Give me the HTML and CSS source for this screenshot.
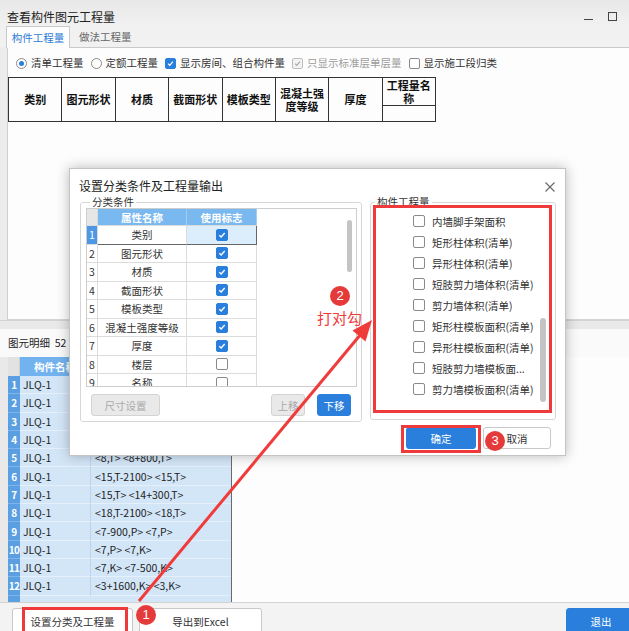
FILE: index.html
```html
<!DOCTYPE html>
<html lang="zh-CN">
<head>
<meta charset="utf-8">
<title>查看构件图元工程量</title>
<link rel="stylesheet" href="styles.css">
</head>
<body>
<div class="win">
  <div class="titlebar">
    <span class="title">查看构件图元工程量</span>
    <span class="wmin"></span>
    <span class="wmax"></span>
  </div>
  <div class="tabs">
    <div class="tab active">构件工程量</div>
    <div class="tab">做法工程量</div>
  </div>
  <div class="panel">
    <div class="opts">
      <span class="radio on"></span><span class="lbl">清单工程量</span>
      <span class="radio"></span><span class="lbl">定额工程量</span>
      <span class="cb on"><svg viewBox="0 0 12 12"><path d="M2.8 6.2 5 8.4 9.2 3.6"/></svg></span><span class="lbl">显示房间、组合构件量</span>
      <span class="cb dis"><svg viewBox="0 0 12 12"><path d="M2.8 6.2 5 8.4 9.2 3.6"/></svg></span><span class="lbl dim">只显示标准层单层量</span>
      <span class="cb"></span><span class="lbl">显示施工段归类</span>
    </div>
    <table class="qty">
      <colgroup><col><col><col><col><col><col><col><col></colgroup>
      <tr class="r1">
        <th rowspan="2">类别</th><th rowspan="2">图元形状</th><th rowspan="2">材质</th><th rowspan="2">截面形状</th><th rowspan="2">模板类型</th><th rowspan="2">混凝土强度等级</th><th rowspan="2">厚度</th><th>工程量名称</th>
      </tr>
      <tr class="r2"><th></th></tr>
    </table>
  </div>
  <div class="splitter"></div>
  <div class="dhead">图元明细&nbsp;&nbsp;52</div>
  <div class="detail">
    <div class="mgrid">
      <div class="mh mhrn"></div><div class="mh">构件名称</div><div class="mh">图元位置</div>
      <div class="mrn">1</div><div class="mnm">JLQ-1</div><div class="mval">&lt;8,T-2100&gt; &lt;8,T&gt;</div>
      <div class="mrn">2</div><div class="mnm">JLQ-1</div><div class="mval">&lt;9,T&gt; &lt;9+800,T&gt;</div>
      <div class="mrn">3</div><div class="mnm">JLQ-1</div><div class="mval">&lt;10,T-2100&gt; &lt;10,T&gt;</div>
      <div class="mrn">4</div><div class="mnm">JLQ-1</div><div class="mval">&lt;12,T&gt; &lt;12+300,T&gt;</div>
      <div class="mrn">5</div><div class="mnm">JLQ-1</div><div class="mval">&lt;8,T&gt; &lt;8+800,T&gt;</div>
      <div class="mrn">6</div><div class="mnm">JLQ-1</div><div class="mval">&lt;15,T-2100&gt; &lt;15,T&gt;</div>
      <div class="mrn">7</div><div class="mnm">JLQ-1</div><div class="mval">&lt;15,T&gt; &lt;14+300,T&gt;</div>
      <div class="mrn">8</div><div class="mnm">JLQ-1</div><div class="mval">&lt;18,T-2100&gt; &lt;18,T&gt;</div>
      <div class="mrn">9</div><div class="mnm">JLQ-1</div><div class="mval">&lt;7-900,P&gt; &lt;7,P&gt;</div>
      <div class="mrn">10</div><div class="mnm">JLQ-1</div><div class="mval">&lt;7,P&gt; &lt;7,K&gt;</div>
      <div class="mrn">11</div><div class="mnm">JLQ-1</div><div class="mval">&lt;7,K&gt; &lt;7-500,K&gt;</div>
      <div class="mrn">12</div><div class="mnm">JLQ-1</div><div class="mval">&lt;3+1600,K&gt; &lt;3,K&gt;</div>
    </div>
    <div class="rest"></div>
  </div>
  <div class="bbar">
    <button class="btn b1">设置分类及工程量</button>
    <button class="btn b2">导出到Excel</button>
    <button class="btn exit">退出</button>
  </div>
</div>

<div class="dialog">
  <div class="dtitle">
    <span class="dtext">设置分类条件及工程量输出</span>
    <svg class="close" viewBox="0 0 10 10"><path d="M0.5 0.5 9.5 9.5M9.5 0.5 0.5 9.5"/></svg>
  </div>
  <div class="dbody">
    <fieldset class="fs fs-l">
      <legend>分类条件</legend>
      <div class="gbox">
        <div class="dgrid">
          <div class="hrn"></div><div class="h">属性名称</div><div class="h">使用标志</div>
          <div class="rn sel">1</div><div class="nm s1">类别</div><div class="fl s1 s1f"><span class="cb on big"><svg viewBox="0 0 12 12"><path d="M2.8 6.2 5 8.4 9.2 3.6"/></svg></span></div>
          <div class="rn">2</div><div class="nm">图元形状</div><div class="fl"><span class="cb on big"><svg viewBox="0 0 12 12"><path d="M2.8 6.2 5 8.4 9.2 3.6"/></svg></span></div>
          <div class="rn">3</div><div class="nm">材质</div><div class="fl"><span class="cb on big"><svg viewBox="0 0 12 12"><path d="M2.8 6.2 5 8.4 9.2 3.6"/></svg></span></div>
          <div class="rn">4</div><div class="nm">截面形状</div><div class="fl"><span class="cb on big"><svg viewBox="0 0 12 12"><path d="M2.8 6.2 5 8.4 9.2 3.6"/></svg></span></div>
          <div class="rn">5</div><div class="nm">模板类型</div><div class="fl"><span class="cb on big"><svg viewBox="0 0 12 12"><path d="M2.8 6.2 5 8.4 9.2 3.6"/></svg></span></div>
          <div class="rn">6</div><div class="nm">混凝土强度等级</div><div class="fl"><span class="cb on big"><svg viewBox="0 0 12 12"><path d="M2.8 6.2 5 8.4 9.2 3.6"/></svg></span></div>
          <div class="rn">7</div><div class="nm">厚度</div><div class="fl"><span class="cb on big"><svg viewBox="0 0 12 12"><path d="M2.8 6.2 5 8.4 9.2 3.6"/></svg></span></div>
          <div class="rn">8</div><div class="nm">楼层</div><div class="fl"><span class="cb big"></span></div>
          <div class="rn">9</div><div class="nm">名称</div><div class="fl"><span class="cb big"></span></div>
        </div>
        <div class="vs vs-l"><div class="thumb"></div></div>
      </div>
      <div class="gbtns">
        <button class="dbtn dis">尺寸设置</button>
        <button class="dbtn dis up">上移</button>
        <button class="dbtn pri down">下移</button>
      </div>
    </fieldset>
    <fieldset class="fs fs-r">
      <legend>构件工程量</legend>
      <div class="list">
        <div class="items">
          <div class="item"><span class="cb big"></span><span>内墙脚手架面积</span></div>
          <div class="item"><span class="cb big"></span><span>矩形柱体积(清单)</span></div>
          <div class="item"><span class="cb big"></span><span>异形柱体积(清单)</span></div>
          <div class="item"><span class="cb big"></span><span>短肢剪力墙体积(清单)</span></div>
          <div class="item"><span class="cb big"></span><span>剪力墙体积(清单)</span></div>
          <div class="item"><span class="cb big"></span><span>矩形柱模板面积(清单)</span></div>
          <div class="item"><span class="cb big"></span><span>异形柱模板面积(清单)</span></div>
          <div class="item"><span class="cb big"></span><span>短肢剪力墙模板面...</span></div>
          <div class="item"><span class="cb big"></span><span>剪力墙模板面积(清单)</span></div>
        </div>
        <div class="vs vs-r"><div class="thumb"></div></div>
      </div>
    </fieldset>
  </div>
  <div class="dbtns">
    <button class="dbtn pri ok">确定</button>
    <button class="dbtn cancel">取消</button>
  </div>
</div>

<div class="mark m-right"></div>
<div class="mark m-ok"></div>
<div class="mark m-b1"></div>
<svg class="arrow" viewBox="0 0 629 631"><line x1="139" y1="601" x2="361" y2="334"/><polygon points="372,320 365.5,341.5 352.5,330.5"/></svg>
<div class="note">打对勾</div>
<div class="badge bd1">1</div>
<div class="badge bd2">2</div>
<div class="badge bd3">3</div>
</body>
</html>
```

FILE: styles.css
```css
* { box-sizing: border-box; }
html, body { margin: 0; padding: 0; }
body {
  width: 629px; height: 631px; overflow: hidden; position: relative;
  background: #eeeeee;
  font-family: "Noto Sans CJK SC", "Noto Sans", sans-serif;
  font-size: 10.5px; color: #333;
}

/* ---------- main window ---------- */
.win { display: flex; flex-direction: column; height: 631px; background: #ececec; }
.titlebar {
  flex: none; height: 26px; display: flex; align-items: center; padding-left: 7px;
  background: linear-gradient(#e8e8e8, #f1f1f1);
}
.title { flex: 1; font-size: 12px; line-height: 16px; color: #222; margin-top: 8px; }
.wmin { width: 9px; height: 1px; background: #444; margin: 13px 15px 0 0; }
.wmax { width: 9px; height: 9px; border: 1px solid #444; margin: 6px 12px 0 0; }

.tabs { flex: none; height: 21px; display: flex; align-items: flex-end; padding-left: 6px; position: relative; z-index: 1; background: #f1f1f1; }
.tab { height: 21px; line-height: 21px; padding: 0 9px; color: #666; }
.tab.active {
  width: 64px; height: 22px; margin-bottom: -1px; padding: 0; text-align: center; line-height: 21px;
  background: #fdfdfd; border: 1px solid #cacaca; border-bottom: none; color: #2b7bd6;
}

.panel {
  flex: none; height: 273px; margin-left: 7px; background: #fdfdfd;
  border-top: 1px solid #cacaca; border-left: 1px solid #cfcfcf; border-bottom: 1px solid #d6d6d6;
}
.opts { height: 29px; padding: 1px 0 0 8px; display: flex; align-items: center; }
.radio { width: 11px; height: 11px; border: 1px solid #8a8a8a; border-radius: 50%; background: #fff; display: flex; align-items: center; justify-content: center; flex: none; }
.radio.on::after { content: ""; width: 5px; height: 5px; border-radius: 50%; background: #2b7fdc; }
.lbl { margin: 0 7px 0 4px; line-height: 16px; white-space: nowrap; color: #333; }
.lbl.dim { color: #9c9c9c; }

.cb { width: 11px; height: 11px; border: 1px solid #8a8a8a; border-radius: 2px; background: #fff; display: flex; flex: none; }
.cb svg { width: 100%; height: 100%; }
.cb svg path { fill: none; stroke: #fff; stroke-width: 1.6; }
.cb.on { background: #2b7fdc; border-color: #2b7fdc; }
.cb.dis { background: #f3f3f3; border-color: #bdbdbd; }
.cb.dis svg path { stroke: #a8a8a8; }
.cb.big { width: 12px; height: 12px; }

.qty { border-collapse: collapse; table-layout: fixed; width: 427px; }
.qty col { width: 53.375px; }
.qty th {
  border: 1px solid #333; padding: 0 2px; font-size: 11px; line-height: 13px;
  font-weight: bold; color: #111; text-align: center;
}
.qty .r1 th { height: 28px; }
.qty .r2 th { height: 16px; }

.splitter { flex: none; height: 9px; background: #e9e9e9; border-top: 1px solid #d3d3d3; }
.dhead { flex: none; height: 28px; line-height: 28px; padding-left: 8px; background: #fafafa; color: #222; }

.detail { flex: none; height: 245px; display: flex; padding-left: 8px; background: #e9e9e9; }
.mgrid {
  width: 224px; border-right: 1px solid #6a6a6a; overflow: hidden;
  display: grid; grid-template-columns: 12px 71px 140px;
  grid-template-rows: 19px repeat(12, 18.3px);
  background: linear-gradient(to right, #5b9fe3 12px, #d3e6f8 12px);
}
.mh { background: #72b3ef; color: #fff; font-weight: bold; display: flex; align-items: center; justify-content: center; border-right: 1px solid #9cc8f2; }
.mh.mhrn { background: #e2e2e2; border-right: 1px solid #cfcfcf; }
.mrn { background: #5b9fe3; color: #fff; font-weight: bold; font-size: 10px; letter-spacing: -0.6px; display: flex; align-items: center; justify-content: center; border-bottom: 1px solid #7eb4ea; }
.mnm, .mval { background: #d3e6f8; display: flex; align-items: center; color: #222; border-bottom: 1px solid #e6f0fa; white-space: nowrap; }
.mnm { padding-left: 3px; border-right: 1px solid #bcd4ec; }
.mval { padding-left: 4px; }
.rest { flex: 1; background: #fdfdfd; }

.bbar { flex: none; height: 29px; display: flex; align-items: flex-start; padding: 5px 0 0 12px; background: #f3f3f3; border-top: 1px solid #d2d2d2; }
.btn {
  font-family: inherit; font-size: 10.5px; height: 26px; padding: 0;
  border: 1px solid #c9c9c9; border-radius: 3px; background: #fff; color: #333;
}
.b1 { width: 121px; }
.b2 { width: 123px; margin-left: 6px; }
.exit { width: 70px; margin-left: auto; margin-right: -7px; background: #2b7fdc; border-color: #2b7fdc; color: #fff; }

/* ---------- dialog ---------- */
.dialog {
  position: absolute; left: 69px; top: 168px; width: 497px; height: 288px;
  background: #fff; border: 1px solid #c4c4c4; box-shadow: 0 0 12px rgba(0,0,0,0.28);
  display: flex; flex-direction: column;
}
.dtitle { flex: none; height: 27px; padding: 9px 0 0 9px; display: flex; align-items: flex-start; }
.dtext { flex: 1; font-size: 12px; line-height: 16px; color: #222; }
.close { width: 10px; height: 10px; margin: 4px 10px 0 0; }
.close path { stroke: #666; stroke-width: 1.1; fill: none; }

.dbody { flex: none; display: flex; gap: 8px; padding: 0 9px 0 10px; align-items: flex-start; }
.fs { margin: 0; border: 1px solid #d6d6d6; border-radius: 3px; min-width: 0; }
.fs legend { font-size: 10.5px; line-height: 12px; padding: 0 2px; margin-left: 4px; color: #333; }
.fs-l { width: 282px; height: 226px; padding: 0 4px 5px 5px; }
.fs-r { width: 186px; height: 224px; padding: 0; }

.gbox { height: 179px; border: 1px solid #cdcdcd; display: flex; overflow: hidden; background: #fff; }
.dgrid {
  width: 170px; display: grid; grid-template-columns: 11px 89px 70px;
  grid-template-rows: 17px repeat(9, 18.5px); align-self: flex-start;
}
.dgrid > div { display: flex; align-items: center; justify-content: center; border-right: 1px solid #dcdcdc; border-bottom: 1px solid #dcdcdc; white-space: nowrap; }
.dgrid .hrn { background: #e6e6e6; }
.dgrid .h { background: #7ab8f0; color: #fff; font-weight: bold; border-right-color: #a5cdf4; }
.dgrid .rn { color: #333; background: #fff; }
.dgrid .rn.sel { background: #4d97e6; color: #fff; }
.dgrid .nm { color: #333; }
.dgrid .s1 { border-bottom-color: #666; }
.dgrid .s1f { background: #dcedfc; border-right-color: #666; }
.vs { flex: none; }
.vs .thumb { background: #c4c4c4; border-radius: 3px; }
.vs-l { width: 5px; margin-left: auto; margin-right: 4px; }
.vs-l .thumb { margin-top: 11px; height: 52px; }

.gbtns { height: 22px; margin-top: 7px; display: flex; padding: 0 6px 0 5px; }
.dbtn { font-family: inherit; font-size: 10.5px; height: 22px; padding: 0; border-radius: 3px; border: 1px solid #c9c9c9; background: #fff; color: #333; }
.dbtn.dis { background: #e9e9e9; border-color: #d3d3d3; color: #a9a9a9; width: 69px; }
.dbtn.up { width: 34px; margin-left: auto; }
.dbtn.pri { background: #2b7fdc; border-color: #2b7fdc; color: #fff; }
.dbtn.down { width: 34px; margin-left: 12px; }

.list { display: flex; height: 211px; }
.items { flex: 1; padding-top: 2.5px; }
.item { height: 21px; display: flex; align-items: center; padding-left: 42px; color: #333; white-space: nowrap; }
.item span + span { margin-left: 7px; }
.vs-r { width: 6px; margin-right: 9px; }
.vs-r .thumb { margin-top: 110px; height: 84px; }

.dbtns { flex: none; display: flex; justify-content: flex-end; gap: 7px; padding-right: 14px; margin-top: 5px; }
.dbtn.ok { width: 70px; }
.dbtn.cancel { width: 68px; }

/* ---------- annotations ---------- */
.mark { position: absolute; border: 3px solid #ee3a3a; }
.m-right { left: 373px; top: 205px; width: 179px; height: 208px; }
.m-ok { left: 401px; top: 425px; width: 80px; height: 28px; }
.m-b1 { left: 22px; top: 607px; width: 106px; height: 30px; }
.arrow { position: absolute; left: 0; top: 0; width: 629px; height: 631px; pointer-events: none; }
.arrow line { stroke: #f03b3b; stroke-width: 3; }
.arrow polygon { fill: #f03b3b; }
.note { position: absolute; left: 317px; top: 309px; font-size: 15px; line-height: 18px; color: #f03a3a; }
.badge {
  position: absolute; width: 20px; height: 20px; border-radius: 50%;
  background: #e53a3a; color: #fff; font-size: 13px; line-height: 20px; text-align: center;
  font-family: "Liberation Sans", sans-serif;
}
.bd1 { left: 136px; top: 605px; }
.bd2 { left: 330px; top: 286px; }
.bd3 { left: 485px; top: 431px; }
```
